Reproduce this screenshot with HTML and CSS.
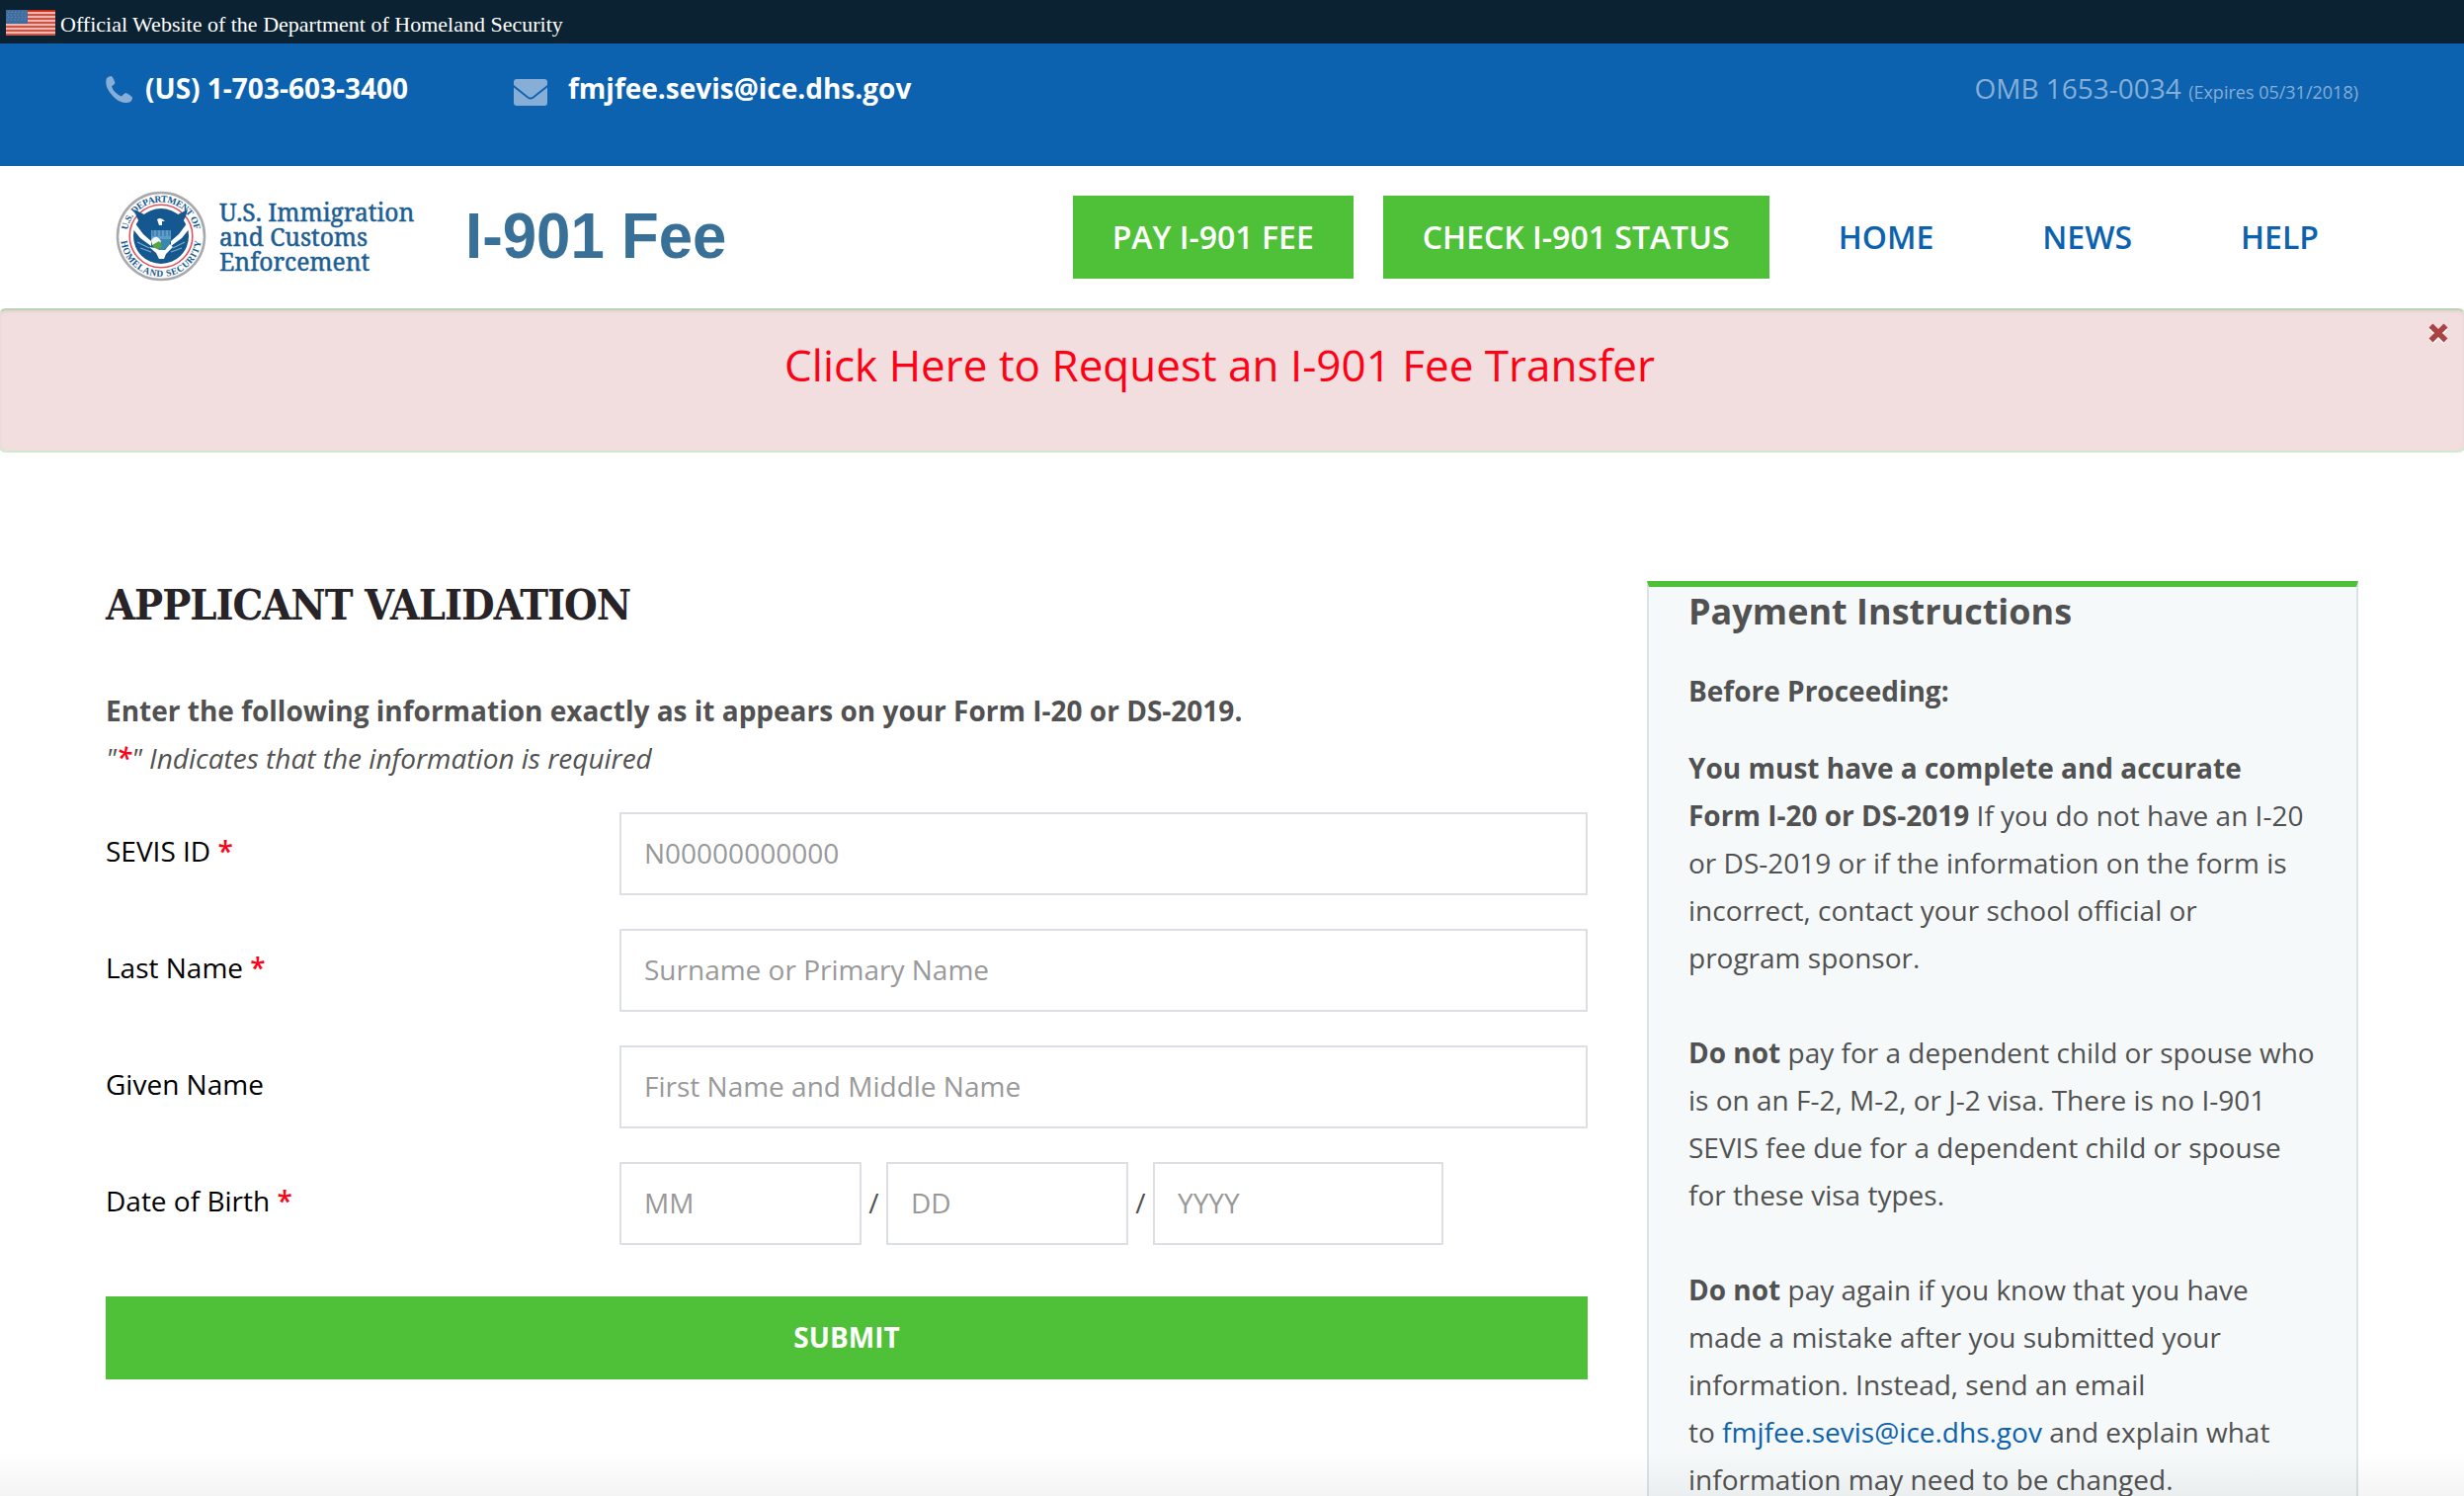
FILE: index.html
```html
<!DOCTYPE html>
<html lang="en">
<head>
<meta charset="utf-8">
<title>I-901 Fee</title>
<link rel="stylesheet" href="styles.css">
</head>
<body>
<div class="gov-bar">
  <svg class="flag" viewBox="0 0 50 26" preserveAspectRatio="none">
    <rect width="50" height="26" fill="#efb5ae"/>
    <path d="M0 1H50M0 5H50M0 9H50M0 13H50M0 17H50M0 21H50M0 25H50" stroke="#c95545" stroke-width="2"/>
    <path d="M22 .8H50" stroke="#cf2010" stroke-width="1.6"/>
    <rect width="22" height="14" fill="#3f6c9f"/>
    <path d="M2 2.500H22M1 5H22M2 7.500H22M1 10H22" stroke="#6489b3" stroke-width="1" stroke-dasharray="1.500 2"/>
  </svg>
  <span>Official Website of the Department of Homeland Security</span>
</div>
<div class="contact-bar">
  <svg class="phone" viewBox="0 0 27 27"><path d="M1 2Q3 0 6 0Q8 2 9.500 7Q9 8 6 10.500Q8 17 16 20.500Q19 17 20.500 17Q25 19 27 21.500Q27 25 24 26.500Q15 29 7 20Q-2 10 1 2Z"/></svg>
  <span class="phone-no">(US) 1-703-603-3400</span>
  <svg class="mail" viewBox="0 0 34 27"><path d="M3 0H31Q34 0 34 3V6L19 18Q17 19 15 18L0 6V3Q0 0 3 0Z"/><path d="M0 8.500L14 19.500Q17 21.500 20 19.500L34 8.500V24Q34 27 31 27H3Q0 27 0 24Z"/></svg>
  <span class="email">fmjfee.sevis@ice.dhs.gov</span>
  <span class="omb">OMB 1653-0034 <small>(Expires 05/31/2018)</small></span>
</div>
<header class="header">
  <svg class="seal" viewBox="0 0 92 92">
    <defs><path id="arcTop" d="M11.500 46A34.500 34.500 0 0 1 80.500 46"/><path id="arcBottom" d="M5 46A41 41 0 0 0 87 46"/></defs>
    <circle cx="46" cy="46" r="44" fill="#fff" stroke="#a8a9ad" stroke-width="2.600"/>
    <circle cx="46" cy="46" r="31.800" fill="#fff" stroke="#e0535c" stroke-width="1.600"/>
    <circle cx="46" cy="46" r="28" fill="#14588f"/>
    <path d="M19 32L28 44L36 51L36 56L25 48L17 38ZM73 32L64 44L56 51L56 56L67 48L75 38Z" fill="#fff"/>
    <path d="M22 52L34 58M25 58L36 62M70 52L58 58M67 58L56 62" stroke="#7fa9ca" stroke-width="1.200"/>
    <path d="M19 19Q22 35 34 40L37 50H55L58 40Q70 35 73 19L61 25Q52 25 50 31L46 27L42 31Q40 25 31 25Z" fill="#14588f"/>
    <path d="M42 29Q46 26 50 31L47 31V35H44Z" fill="#fff"/>
    <path d="M36 40H56V49Q55 57 46 61Q37 57 36 49Z" fill="#5d9bc8"/>
    <path d="M38 40V46M42 40V46M46 40V46M50 40V46M54 40V46" stroke="#2c6da1"/>
    <path d="M36 49H56Q55 57 46 61Q37 57 36 49Z" fill="#3989ac"/>
    <path d="M36 50Q41 43 46 51L44 55H37Z" fill="#f4f8fb"/>
    <path d="M37 55L44 51L47 56L43 59L39 58Z" fill="#58a63b"/>
    <path d="M34 57L40 58L44 60L50 60L55 54L58 57L51 64L49 69H44L41 63Z" fill="#fff"/>
    <g class="seal-text" fill="#14588f"><text><textPath href="#arcTop" startOffset="50%" text-anchor="middle" textLength="96">U.S. DEPARTMENT OF</textPath></text><text><textPath href="#arcBottom" startOffset="50%" text-anchor="middle" textLength="118">HOMELAND SECURITY</textPath></text></g>
  </svg>
  <div class="agency"><div>U.S. Immigration</div><div>and Customs</div><div>Enforcement</div></div>
  <div class="brand">I-901 Fee</div>
  <nav class="nav">
    <a class="btn pay">PAY I-901 FEE</a><a class="btn check">CHECK I-901 STATUS</a>
    <a class="link home">HOME</a><a class="link news">NEWS</a><a class="link">HELP</a>
  </nav>
</header>
<div class="alert">
  <span class="alert-text">Click Here to Request an I-901 Fee Transfer</span>
  <svg class="close" viewBox="0 0 20 22"><path d="M3 3L17 17M17 3L3 17" stroke="#fff" stroke-width="6" transform="translate(0 2)"/><path d="M2.500 2.500L17.500 17.500M17.500 2.500L2.500 17.500" stroke="#a94442" stroke-width="5.600"/></svg>
</div>
<main class="main">
  <form class="form">
    <h1>APPLICANT VALIDATION</h1>
    <p class="lead">Enter the following information exactly as it appears on your Form I-20 or DS-2019.</p>
    <p class="note">"<b class="req">*</b>" Indicates that the information is required</p>
    <div class="row"><label>SEVIS ID <b class="req">*</b></label><input placeholder="N00000000000"></div>
    <div class="row"><label>Last Name <b class="req">*</b></label><input placeholder="Surname or Primary Name"></div>
    <div class="row"><label>Given Name</label><input placeholder="First Name and Middle Name"></div>
    <div class="row"><label>Date of Birth <b class="req">*</b></label><input class="short" placeholder="MM"><span class="slash">/</span><input class="short" placeholder="DD"><span class="slash">/</span><input class="year" placeholder="YYYY"></div>
    <button class="submit" type="button">SUBMIT</button>
  </form>
  <aside class="side">
    <h2>Payment Instructions</h2>
    <h3>Before Proceeding:</h3>
    <p><b>You must have a complete and accurate<br>Form I-20 or DS-2019</b> If you do not have an I-20<br>or DS-2019 or if the information on the form is<br>incorrect, contact your school official or<br>program sponsor.</p>
    <p><b>Do not</b> pay for a dependent child or spouse who<br>is on an F-2, M-2, or J-2 visa. There is no I-901<br>SEVIS fee due for a dependent child or spouse<br>for these visa types.</p>
    <p><b>Do not</b> pay again if you know that you have<br>made a mistake after you submitted your<br>information. Instead, send an email<br>to <a>fmjfee.sevis@ice.dhs.gov</a> and explain what<br>information may need to be changed.</p>
  </aside>
</main>
<div class="shade"></div>
</body>
</html>
```
FILE: styles.css
```css
* { box-sizing: border-box; }
body { margin: 0; height: 1514px; overflow: hidden; background: #fff; color: #515151; font: 28px/48px "Open Sans", sans-serif; position: relative; white-space: nowrap; }
.gov-bar { height: 44px; background: #0b2232; color: #fff; display: flex; padding: 10px 6px 0; gap: 5px; font: 22px/30px "Liberation Serif", serif; }
.flag { width: 50px; height: 26px; }
.contact-bar { height: 124px; background: #0c62ae; display: flex; align-items: flex-start; padding: 21px 107px 0; color: #fff; font-weight: 700; font-size: 28px; }
.phone { width: 27px; height: 27px; fill: #86aed7; margin-top: 12px; }
.phone-no { margin-left: 13px; width: 373px; }
.mail { width: 34px; height: 27px; fill: #86aed7; margin-top: 15px; }
.email { margin-left: 21px; }
.omb { margin-left: auto; font-weight: 400; color: #86aed7; }
.omb small { font-size: 18px; }
.header { height: 144px; display: flex; background: #fff; }
.seal { width: 92px; height: 92px; margin: 25px 0 0 117px; }
.seal-text { font: 700 9.500px "Liberation Serif", serif; }
.agency { margin: 34px 0 0 13px; width: 249px; color: #1c5e93; font: 24.600px/25px "Noto Serif", "Liberation Serif", serif; -webkit-text-stroke: .5px #1c5e93; }
.brand { color: #387098; font: 700 64px/72px "Liberation Sans", sans-serif; margin-top: 35px; transform: scaleX(.965); transform-origin: left; }
.nav { margin-left: auto; margin-right: 147px; display: flex; padding-top: 30px; font-weight: 600; font-size: 32px; line-height: 83px; color: #0c62ae; }
.btn { height: 84px; background: #4fc138; color: #fff; text-align: center; }
.pay { width: 284px; }
.check { width: 391px; margin: 0 70px 0 30px; }
.home, .news { margin-right: 110px; }
.alert { height: 146px; margin: 0 -2px; background: #f2dede; border: 2px solid #d0ead0; border-top-color: #bcd2b8; border-radius: 8px; position: relative; text-align: center; padding: 25px 25px 0 0; box-shadow: inset 0 2px 3px #e6d3d3; }
.alert-text { color: #ff0015; font-size: 44px; line-height: 60px; }
.close { position: absolute; right: 16px; top: 13px; width: 20px; height: 22px; }
.main { display: flex; justify-content: space-between; padding: 130px 107px 0; }
.form { width: 1500px; }
h1 { margin: 0; font: 700 43px/48px "DejaVu Serif Condensed", "DejaVu Serif", serif; letter-spacing: -1px; color: #272327; }
.lead, .note { margin: 0; }
.lead { font-weight: 700; margin-top: 59px; }
.note { font-style: italic; margin-bottom: 31px; }
.req { color: #ff0015; font-weight: 600; }
.row { display: flex; height: 84px; margin-bottom: 34px; }
label { width: 520px; color: #000; line-height: 78px; }
input { flex: 1; min-width: 0; border: 2px solid #dcdfe3; border-radius: 0; padding: 0 23px 3px; font: 28px "Open Sans", sans-serif; background: #fff; }
input::placeholder { color: #999; opacity: 1; }
.short { flex: none; width: 245px; }
.year { flex: none; width: 294px; }
.slash { width: 25px; text-align: center; line-height: 83px; }
.submit { display: block; width: 1500px; height: 84px; margin-top: 52px; background: #4fc138; color: #fff; border: 0; padding: 0 0 2px; font: 700 28px "Open Sans", sans-serif; }
.side { width: 720px; height: 960px; background: #f5f9fa; border: 2px solid #dae3e7; border-top: 6px solid #4fc138; padding: 0 40px; }
h2 { font-size: 36px; line-height: 50px; margin: 0; }
h3 { font-size: 28px; line-height: 48px; margin: 31px 0 30px; }
.side p { margin: 0 0 48px; }
.side a { color: #0c62ae; }
.shade { position: absolute; left: 0; right: 0; bottom: 0; height: 44px; background: linear-gradient(transparent, rgba(0,0,0,.045)); }
```
